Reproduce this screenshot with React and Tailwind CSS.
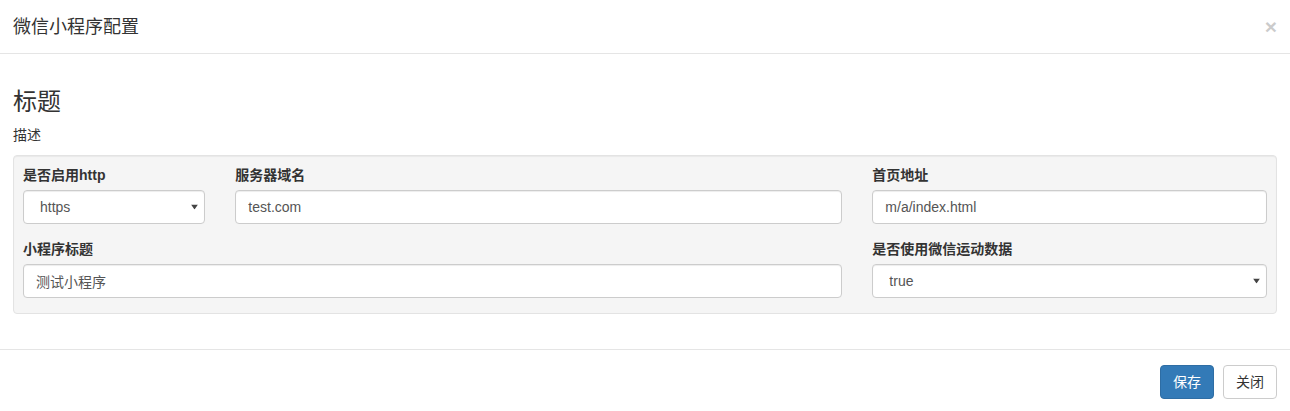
import React from "react";

const fontStack = "font-['Liberation_Sans','Noto_Sans_CJK_SC',sans-serif]";

const Caret = () => (
  <svg
    className="pointer-events-none absolute right-[7px] top-1/2 -translate-y-1/2"
    width="7"
    height="5"
    viewBox="0 0 7 5"
  >
    <path d="M0 0 H7 L3.5 5 Z" fill="#444" />
  </svg>
);

const Field = ({ label, span, children }) => (
  <div className={`${span} mb-[15px]`}>
    <label className="mb-[5px] block text-[14px] font-bold leading-[20px] text-[#333]">
      {label}
    </label>
    {children}
  </div>
);

const TextInput = ({ value }) => (
  <input
    readOnly
    defaultValue={value}
    className="block h-[34px] w-full rounded-[4px] border border-[#ccc] bg-white px-[12px] text-[14px] text-[#555] shadow-[inset_0_1px_1px_rgba(0,0,0,0.075)] outline-none"
  />
);

const Select = ({ value, options }) => (
  <div className="relative">
    <select
      defaultValue={value}
      className="block h-[34px] w-full appearance-none rounded-[4px] border border-[#ccc] bg-white pl-[16px] pr-[20px] text-[14px] text-[#555] shadow-[inset_0_1px_1px_rgba(0,0,0,0.075)] outline-none"
    >
      {options.map((o) => (
        <option key={o} value={o}>
          {o}
        </option>
      ))}
    </select>
    <Caret />
  </div>
);

export default function App() {
  return (
    <div className={`h-[411px] w-[1290px] overflow-hidden bg-white text-[#333] ${fontStack}`}>
      {/* header */}
      <div className="flex h-[54px] items-center justify-between border-b border-[#e5e5e5] px-[13px]">
        <h4 className="text-[18px] leading-[26px] font-normal">微信小程序配置</h4>
        <button className="text-[21px] leading-none font-bold text-black opacity-20">×</button>
      </div>

      {/* body */}
      <div className="px-[13px] pt-[15px] pb-[15px]">
        <h3 className="mt-[20px] mb-[10px] text-[24px] leading-[26px] font-normal">标题</h3>
        <p className="mb-[10px] text-[14px] leading-[20px]">描述</p>

        <div className="mb-[20px] rounded-[4px] border border-[#e3e3e3] bg-[#f5f5f5] px-[9px] pt-[9px] shadow-[inset_0_1px_1px_rgba(0,0,0,0.05)]">
          <div className="grid grid-cols-12 gap-x-[30px]">
            <Field label="是否启用http" span="col-span-2">
              <Select value="https" options={["https", "http"]} />
            </Field>
            <Field label="服务器域名" span="col-span-6">
              <TextInput value="test.com" />
            </Field>
            <Field label="首页地址" span="col-span-4">
              <TextInput value="m/a/index.html" />
            </Field>
            <Field label="小程序标题" span="col-span-8">
              <TextInput value="测试小程序" />
            </Field>
            <Field label="是否使用微信运动数据" span="col-span-4">
              <Select value="true" options={["true", "false"]} />
            </Field>
          </div>
        </div>
      </div>

      {/* footer */}
      <div className="flex justify-end gap-[9px] border-t border-[#e5e5e5] px-[13px] pt-[15px]">
        <button className="h-[34px] rounded-[4px] border border-[#2e6da4] bg-[#337ab7] px-[12px] text-[14px] text-white">
          保存
        </button>
        <button className="h-[34px] rounded-[4px] border border-[#ccc] bg-white px-[12px] text-[14px] text-[#333]">
          关闭
        </button>
      </div>
    </div>
  );
}
